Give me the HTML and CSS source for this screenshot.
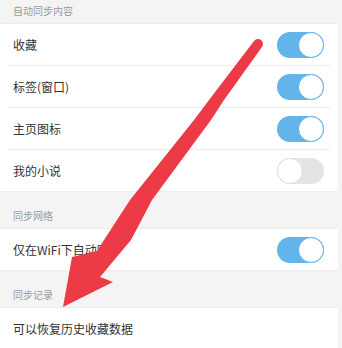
FILE: index.html
```html
<!DOCTYPE html>
<html lang="zh-CN">
<head>
<meta charset="utf-8">
<link rel="stylesheet" href="styles.css">
</head>
<body>
<div class="page">
  <div class="group-title first">自动同步内容</div>
  <div class="panel">
    <div class="row"><span class="label">收藏</span><span class="switch on"><span class="knob"></span></span></div>
    <div class="row"><span class="label">标签(窗口)</span><span class="switch on"><span class="knob"></span></span></div>
    <div class="row"><span class="label">主页图标</span><span class="switch on"><span class="knob"></span></span></div>
    <div class="row last"><span class="label">我的小说</span><span class="switch off"><span class="knob"></span></span></div>
  </div>
  <div class="group-title">同步网络</div>
  <div class="panel">
    <div class="row last"><span class="label">仅在WiFi下自动同步</span><span class="switch on"><span class="knob"></span></span></div>
  </div>
  <div class="group-title">同步记录</div>
  <div class="panel">
    <div class="row last"><span class="label">可以恢复历史收藏数据</span></div>
  </div>
  <svg class="arrow" width="342" height="348" viewBox="0 0 342 348">
    <path d="M254,41 A4.5,4.5 0 0 1 262,47 L224,100 L211,120 L152,200 L131,240 L100,277 L113,282 L63,307 L72,257 L97,251 L104,240 L130,200 L194,120 L209,100 Z" fill="#ec3b46"/>
  </svg>
</div>
</body>
</html>
```

FILE: styles.css
```css
html, body {
  margin: 0;
  padding: 0;
  background: #f4f4f4;
}
body {
  width: 342px;
  height: 348px;
  overflow: hidden;
  font-family: "Noto Sans CJK SC", "Noto Sans", sans-serif;
}
.page {
  position: relative;
  width: 342px;
  height: 348px;
  overflow: hidden;
}
.group-title {
  height: 36px;
  box-sizing: border-box;
  padding: 16px 0 0 13px;
  font-size: 10px;
  line-height: 15px;
  color: #9a9a9a;
}
.group-title.first {
  margin-top: -13px;
}
.panel {
  width: 338px;
  background: #fff;
  border-top: 1px solid #ececec;
  border-bottom: 1px solid #ececec;
  box-sizing: border-box;
}
.row {
  height: 42px;
  display: flex;
  align-items: center;
  justify-content: space-between;
  margin-left: 8px;
  margin-right: 8px;
  padding: 0 6px 0 5px;
  border-bottom: 1px solid #ececec;
  box-sizing: border-box;
}
.row.last {
  border-bottom: none;
  height: 41px;
}
.label {
  font-size: 12px;
  color: #333;
}
.switch {
  position: relative;
  width: 47px;
  height: 26px;
  border-radius: 13px;
  box-sizing: border-box;
}
.switch.on {
  background: #62b4ea;
}
.switch.off {
  background: #e4e4e4;
}
.knob {
  position: absolute;
  top: 0;
  width: 26px;
  height: 26px;
  border-radius: 50%;
  background: #fff;
  box-sizing: border-box;
}
.switch.on .knob {
  right: 0;
  border: 1px solid #62b4ea;
}
.switch.off .knob {
  left: 0;
  border: 1px solid #dedede;
}
.arrow {
  position: absolute;
  left: 0;
  top: 0;
}
```
